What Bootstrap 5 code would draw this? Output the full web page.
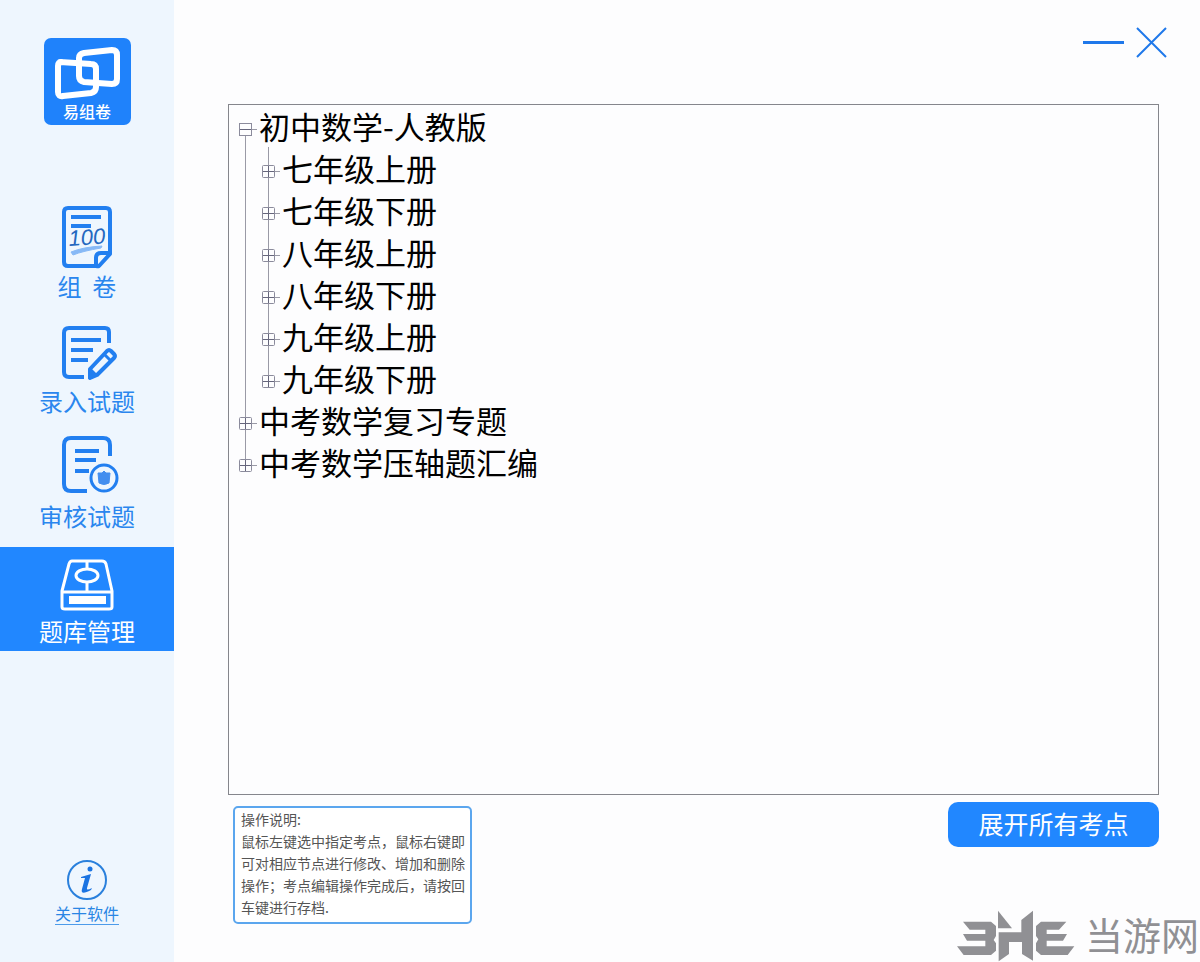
<!DOCTYPE html>
<html lang="zh-CN">
<head>
<meta charset="utf-8">
<meta name="viewport" content="width=device-width, initial-scale=1">
<title>易组卷</title>
<link href="https://cdn.jsdelivr.net/npm/bootstrap@5.3.0/dist/css/bootstrap.min.css" rel="stylesheet">
<style>
  body { font-family: "Noto Sans CJK SC", sans-serif; background: #fdfdfe; color: #000; }
  svg { display: block; flex-shrink: 0; }
  button { font-family: inherit; }
  .side { width: 174px; background: #eef6fe; padding: 38px 0 37px; flex-shrink: 0; }
  .brand { width: 87px; height: 87px; border-radius: 7px; background: #1f82fb; color: #fff; margin-bottom: 77px; }
  .brand-name { font-size: 16px; line-height: 20px; font-weight: 500; }
  .side-nav { gap: 11px; }
  .side-item { height: 104px; padding-top: 4px; color: #2a86ee; text-decoration: none; font-size: 24px; line-height: 28px; white-space: pre; }
  .side-item.active { background: #2187ff; color: #fff; }
  .side-item svg { margin-bottom: 2px; }
  .about { color: #2a86e4; font-size: 16px; line-height: 22px; text-decoration: none; }
  .about span { border-bottom: 1px solid #4c9bea; }
  .content { padding: 0 33px 38px 54px; min-width: 0; }
  .titlebar { height: 104px; padding-top: 24px; gap: 10px; }
  .win-btn { background: none; border: 0; padding: 0; }
  .tree { border: 1px solid #85868c; padding: 0 5px; background: #fdfdfe; }
  .tree-row { height: 42px; font-size: 31px; line-height: 42px; }
  .tree-toggle { background: none; border: 0; padding: 0; }
  .guide { stroke: #9a9aa6; fill: none; }
  .box { stroke: #8b8b9c; fill: #fdfdfe; }
  .mark-line { stroke: #66667c; fill: none; }
  .note { width: 239px; margin: 11px 0 0 5px; border: 2px solid #5ba6ee; border-radius: 5px; padding: 0 4px 4px 6px; font-size: 14px; line-height: 22px; color: #555; background: #fff; }
  .expand { width: 211px; height: 45px; margin-top: 7px; padding: 0 0 2px; border: 0; border-radius: 10px; background: #2187ff; color: #fff; font-size: 25px; line-height: 43px; }
  .expand:hover { background: #1877e8; color: #fff; }
  .site-mark { right: 1px; bottom: 0; color: #909094; font-size: 38px; line-height: 56px; gap: 10px; }
</style>
</head>
<body>
<svg width="0" height="0" class="position-absolute" aria-hidden="true">
  <symbol id="minus" viewBox="0 0 25 42">
    <path class="guide" d="M11.5 31V42M18 24.500H23"/>
    <rect class="box" x="5.500" y="18.500" width="12" height="12"/>
    <path class="mark-line" d="M6 24.500H17"/>
  </symbol>
  <symbol id="plus" viewBox="0 0 25 42">
    <path class="guide" d="M11.500 0V42M18 24.500H23"/>
    <rect class="box" x="5.500" y="18.500" width="12" height="12" rx="1"/>
    <path class="mark-line" d="M6 24.500H17M11.500 19V30"/>
  </symbol>
  <symbol id="plus-last" viewBox="0 0 25 42">
    <path class="guide" d="M11.500 0V19M18 24.500H23"/>
    <rect class="box" x="5.500" y="18.500" width="12" height="12" rx="1"/>
    <path class="mark-line" d="M6 24.500H17M11.500 19V30"/>
  </symbol>
  <symbol id="rail" viewBox="0 0 23 42"><path class="guide" d="M11.500 0V42"/></symbol>
</svg>

<div class="d-flex min-vh-100 position-relative">
  <aside class="side d-flex flex-column align-items-center">
    <div class="brand d-flex flex-column align-items-center">
      <svg width="87" height="63" viewBox="0 0 87 63" fill="none" stroke="#fff" stroke-width="6" stroke-linejoin="round" aria-hidden="true">
        <path d="M16 24 L47 26 Q52 26 52 31 V49 Q52 54 47 55 L19 58 Q14 59 14 54 V28 Q14 24 18 24Z"/>
        <path d="M40 15 L68 12 Q73 12 73 17 V41 Q73 46 68 46 L40 44 Q35 43 35 38 V20 Q35 16 40 15Z"/>
      </svg>
      <span class="brand-name">易组卷</span>
    </div>
    <nav class="side-nav d-flex flex-column w-100">
      <a href="#" class="side-item d-flex flex-column align-items-center"><svg width="64" height="64" viewBox="0 0 64 64" fill="none" stroke="#227ff0" stroke-width="4" aria-hidden="true"><path d="M42 59H13Q9 59 9 55V5Q9 1 13 1H51Q55 1 55 5V47L44 59Q41 60 41 57V51Q41 46 46 46H54" transform="translate(0 1)" stroke-linejoin="round"/><path d="M16 11H46M16 20H36"/><path d="M16 46Q28 41 47 40L46 42Q28 45 18 49Z" fill="#87b9f6" stroke="#87b9f6" stroke-width="1"/><text x="14" y="40" font-family="Liberation Sans, sans-serif" font-style="italic" font-size="22" fill="#2467bf" stroke="none" transform="rotate(-4 14 40)">100</text></svg><span>组&nbsp;&nbsp;卷</span></a>
      <a href="#" class="side-item d-flex flex-column align-items-center"><svg width="64" height="64" viewBox="0 0 64 64" fill="none" stroke="#227ff0" stroke-width="4" aria-hidden="true"><path d="M29 56H14Q9 56 9 51V12Q9 7 14 7H50Q54 7 54 11V22"/><path d="M16 19H46M16 29H38M16 39H33"/><path d="M35 57L35 48L52 30Q54 28 56 30L59 33Q61 35 59 37L42 54Z" stroke-width="4" stroke-linejoin="round"/><path d="M49 33L56 40" stroke-width="3"/><path d="M33 58L36 47L43 54Z" fill="#227ff0" stroke="none"/></svg><span>录入试题</span></a>
      <a href="#" class="side-item d-flex flex-column align-items-center"><svg width="64" height="64" viewBox="0 0 64 64" fill="none" stroke="#227ff0" stroke-width="4" aria-hidden="true"><path d="M32 55H16Q9 55 9 48V9Q9 2 16 2H48Q55 2 55 9V20"/><path d="M20 15H44M20 24H41M20 35H34"/><circle cx="49" cy="42" r="13" stroke-width="3"/><path d="M43 37L47 37L49 35L51 37L55 37L54 47Q49 50 44 47Z" fill="#438eef" stroke="#438eef" stroke-width="1"/></svg><span>审核试题</span></a>
      <a href="#" class="side-item active d-flex flex-column align-items-center" aria-current="page"><svg width="64" height="64" viewBox="0 0 64 64" fill="none" stroke="#fff" stroke-width="3" stroke-linejoin="round" aria-hidden="true"><path d="M17 10H47Q50 10 51 13L57 40V56Q57 58 54 58H10Q7 58 7 56V40L14 13Q15 10 17 10Z"/><path d="M8 41H56M32 10V17M32 31V41"/><ellipse cx="32" cy="24.500" rx="11" ry="6.500"/><path d="M14 45H51V53H14Z" fill="#fff" stroke="none"/></svg><span>题库管理</span></a>
    </nav>
    <a href="#" class="about mt-auto d-flex flex-column align-items-center">
      <svg width="42" height="43" viewBox="0 0 42 43" aria-hidden="true"><circle cx="21" cy="21" r="19" fill="none" stroke="#2a80dc" stroke-width="2"/><path d="M15 18L25 15L21 29Q20 32 26 29L25 31Q14 37 16 30L19 19L15 19Z" fill="#1b74e2"/><circle cx="24" cy="10" r="2.500" fill="#1b74e2"/></svg>
      <span>关于软件</span>
    </a>
  </aside>

  <main class="content flex-grow-1 d-flex flex-column">
    <header class="titlebar d-flex justify-content-end align-items-start">
      <button type="button" class="win-btn" aria-label="最小化"><svg width="44" height="38" viewBox="0 0 44 38" fill="none" stroke="#1f78ea" stroke-width="3"><path d="M2 18.500H43"/></svg></button>
      <button type="button" class="win-btn" aria-label="关闭"><svg width="32" height="38" viewBox="0 0 32 38" fill="none" stroke="#1f78ea" stroke-width="2"><path d="M2 4L31 33M31 4L2 33"/></svg></button>
    </header>

    <section class="tree flex-grow-1 me-2" aria-label="考点">
      <ul class="list-unstyled m-0">
        <li>
          <div class="tree-row d-flex"><button type="button" class="tree-toggle" aria-label="折叠"><svg width="25" height="42"><use href="#minus"/></svg></button><span>初中数学-人教版</span></div>
          <ul class="list-unstyled m-0">
            <li class="tree-row d-flex"><svg width="23" height="42"><use href="#rail"/></svg><button type="button" class="tree-toggle" aria-label="展开"><svg width="25" height="42"><use href="#plus"/></svg></button><span>七年级上册</span></li>
            <li class="tree-row d-flex"><svg width="23" height="42"><use href="#rail"/></svg><button type="button" class="tree-toggle" aria-label="展开"><svg width="25" height="42"><use href="#plus"/></svg></button><span>七年级下册</span></li>
            <li class="tree-row d-flex"><svg width="23" height="42"><use href="#rail"/></svg><button type="button" class="tree-toggle" aria-label="展开"><svg width="25" height="42"><use href="#plus"/></svg></button><span>八年级上册</span></li>
            <li class="tree-row d-flex"><svg width="23" height="42"><use href="#rail"/></svg><button type="button" class="tree-toggle" aria-label="展开"><svg width="25" height="42"><use href="#plus"/></svg></button><span>八年级下册</span></li>
            <li class="tree-row d-flex"><svg width="23" height="42"><use href="#rail"/></svg><button type="button" class="tree-toggle" aria-label="展开"><svg width="25" height="42"><use href="#plus"/></svg></button><span>九年级上册</span></li>
            <li class="tree-row d-flex"><svg width="23" height="42"><use href="#rail"/></svg><button type="button" class="tree-toggle" aria-label="展开"><svg width="25" height="42"><use href="#plus-last"/></svg></button><span>九年级下册</span></li>
          </ul>
        </li>
        <li class="tree-row d-flex"><button type="button" class="tree-toggle" aria-label="展开"><svg width="25" height="42"><use href="#plus"/></svg></button><span>中考数学复习专题</span></li>
        <li class="tree-row d-flex"><button type="button" class="tree-toggle" aria-label="展开"><svg width="25" height="42"><use href="#plus-last"/></svg></button><span>中考数学压轴题汇编</span></li>
      </ul>
    </section>

    <div class="d-flex justify-content-between align-items-start me-2">
      <div class="note">操作说明:<br>鼠标左键选中指定考点，鼠标右键即可对相应节点进行修改、增加和删除操作；考点编辑操作完成后，请按回车键进行存档.</div>
      <button type="button" class="btn expand">展开所有考点</button>
    </div>
  </main>

  <div class="site-mark position-absolute d-flex align-items-end">
    <svg width="118" height="52" viewBox="20 28 354 156" fill="#909094" aria-hidden="true">
      <path d="M38 63H122L137 76V106L130 118L137 128V150L122 163H40L20 137H105V120H50L38 100H105V87H58Z"/>
      <path d="M143 30L185 83H143Z"/>
      <path d="M213 58L248 30V180L215 160V124H176V160L145 182V95H213Z"/>
      <path d="M348 63H272L257 76V106L264 116L257 128V150L272 163H352L372 137H289V120H338L350 100H289V87H326Z"/>
    </svg>
    <span>当游网</span>
  </div>
</div>
<script src="https://cdn.jsdelivr.net/npm/bootstrap@5.3.0/dist/js/bootstrap.bundle.min.js"></script>
</body>
</html>
